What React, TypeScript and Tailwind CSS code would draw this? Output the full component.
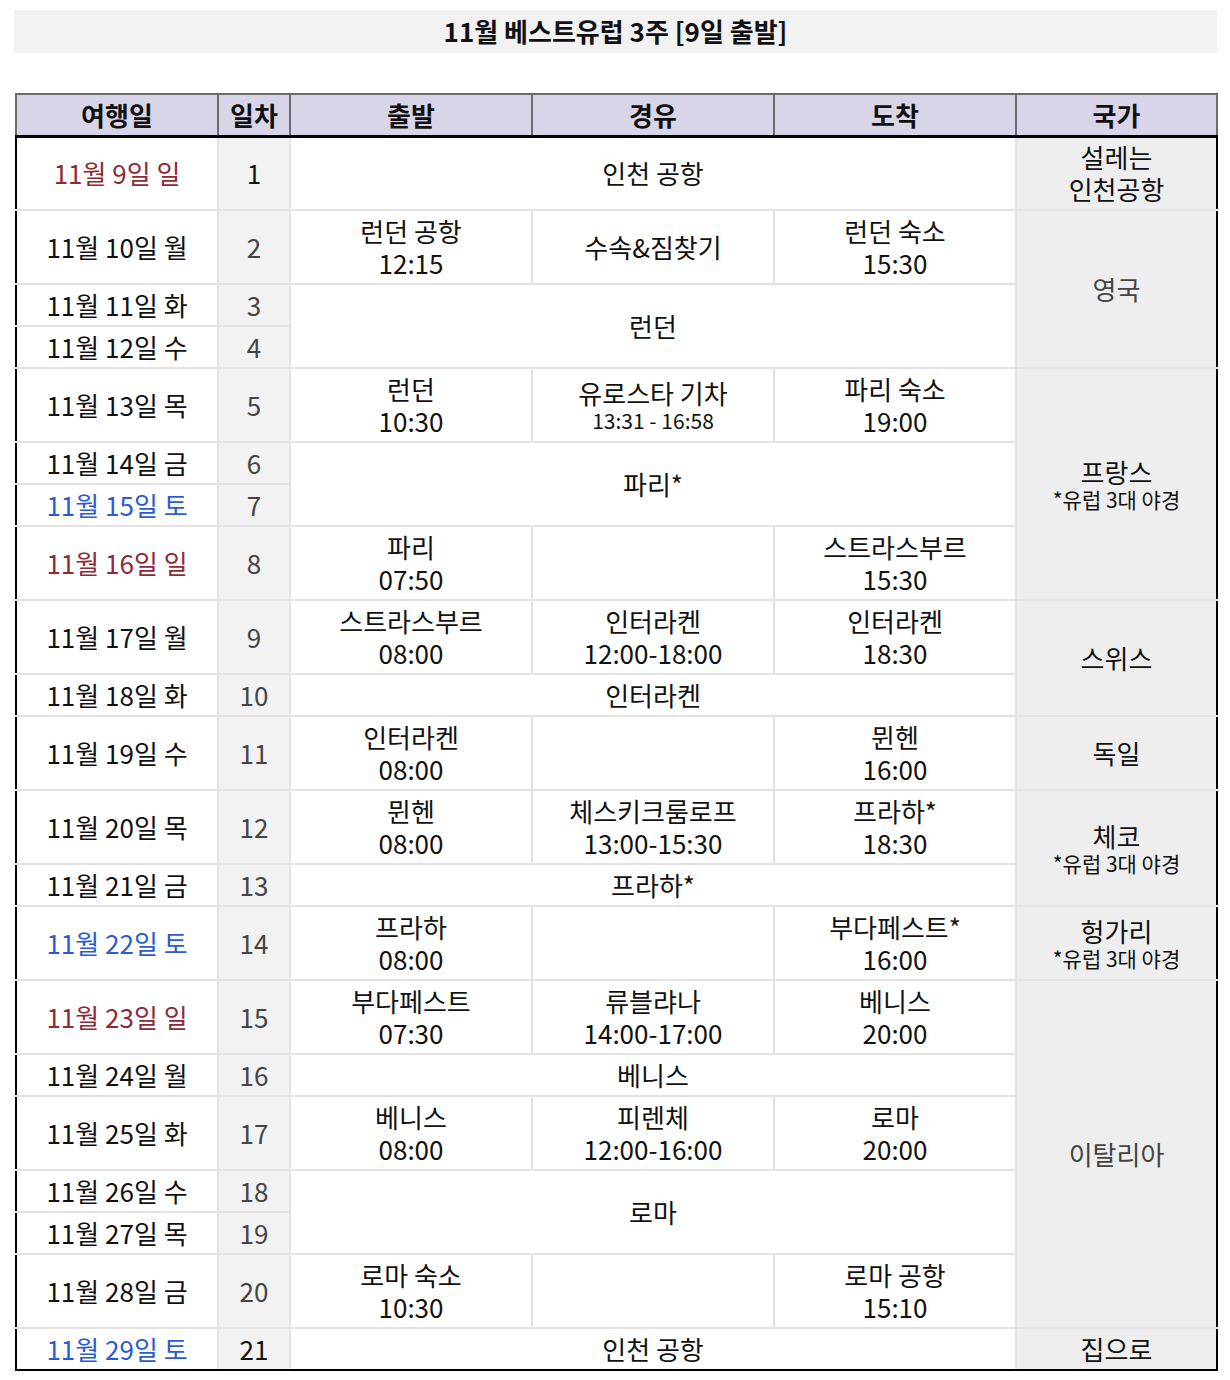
import React from "react";

type Stop = { place: string; time?: string; small?: boolean } | null;

type Row = {
  date: string;
  tone?: "sun" | "sat";
  day: number;
  dayDark?: boolean;
  h: "tall" | "short";
  route?:
    | { kind: "split"; from: Stop; via: Stop; to: Stop }
    | { kind: "span"; text: string; rows: number };
  country?: { name: string; note?: string; rows: number; muted?: boolean };
};

const rows: Row[] = [
  { date: "11월 9일 일", tone: "sun", day: 1, dayDark: true, h: "tall", route: { kind: "span", text: "인천 공항", rows: 1 }, country: { name: "설레는\n인천공항", rows: 1 } },
  { date: "11월 10일 월", day: 2, h: "tall", route: { kind: "split", from: { place: "런던 공항", time: "12:15" }, via: { place: "수속&짐찾기" }, to: { place: "런던 숙소", time: "15:30" } }, country: { name: "영국", rows: 3, muted: true } },
  { date: "11월 11일 화", day: 3, h: "short", route: { kind: "span", text: "런던", rows: 2 } },
  { date: "11월 12일 수", day: 4, h: "short" },
  { date: "11월 13일 목", day: 5, h: "tall", route: { kind: "split", from: { place: "런던", time: "10:30" }, via: { place: "유로스타 기차", time: "13:31 - 16:58", small: true }, to: { place: "파리 숙소", time: "19:00" } }, country: { name: "프랑스", note: "*유럽 3대 야경", rows: 4 } },
  { date: "11월 14일 금", day: 6, h: "short", route: { kind: "span", text: "파리*", rows: 2 } },
  { date: "11월 15일 토", tone: "sat", day: 7, h: "short" },
  { date: "11월 16일 일", tone: "sun", day: 8, h: "tall", route: { kind: "split", from: { place: "파리", time: "07:50" }, via: null, to: { place: "스트라스부르", time: "15:30" } } },
  { date: "11월 17일 월", day: 9, h: "tall", route: { kind: "split", from: { place: "스트라스부르", time: "08:00" }, via: { place: "인터라켄", time: "12:00-18:00" }, to: { place: "인터라켄", time: "18:30" } }, country: { name: "스위스", rows: 2 } },
  { date: "11월 18일 화", day: 10, h: "short", route: { kind: "span", text: "인터라켄", rows: 1 } },
  { date: "11월 19일 수", day: 11, h: "tall", route: { kind: "split", from: { place: "인터라켄", time: "08:00" }, via: null, to: { place: "뮌헨", time: "16:00" } }, country: { name: "독일", rows: 1 } },
  { date: "11월 20일 목", day: 12, h: "tall", route: { kind: "split", from: { place: "뮌헨", time: "08:00" }, via: { place: "체스키크룸로프", time: "13:00-15:30" }, to: { place: "프라하*", time: "18:30" } }, country: { name: "체코", note: "*유럽 3대 야경", rows: 2 } },
  { date: "11월 21일 금", day: 13, h: "short", route: { kind: "span", text: "프라하*", rows: 1 } },
  { date: "11월 22일 토", tone: "sat", day: 14, h: "tall", route: { kind: "split", from: { place: "프라하", time: "08:00" }, via: null, to: { place: "부다페스트*", time: "16:00" } }, country: { name: "헝가리", note: "*유럽 3대 야경", rows: 1 } },
  { date: "11월 23일 일", tone: "sun", day: 15, h: "tall", route: { kind: "split", from: { place: "부다페스트", time: "07:30" }, via: { place: "류블랴나", time: "14:00-17:00" }, to: { place: "베니스", time: "20:00" } }, country: { name: "이탈리아", rows: 6, muted: true } },
  { date: "11월 24일 월", day: 16, h: "short", route: { kind: "span", text: "베니스", rows: 1 } },
  { date: "11월 25일 화", day: 17, h: "tall", route: { kind: "split", from: { place: "베니스", time: "08:00" }, via: { place: "피렌체", time: "12:00-16:00" }, to: { place: "로마", time: "20:00" } } },
  { date: "11월 26일 수", day: 18, h: "short", route: { kind: "span", text: "로마", rows: 2 } },
  { date: "11월 27일 목", day: 19, h: "short" },
  { date: "11월 28일 금", day: 20, h: "tall", route: { kind: "split", from: { place: "로마 숙소", time: "10:30" }, via: null, to: { place: "로마 공항", time: "15:10" } } },
  { date: "11월 29일 토", tone: "sat", day: 21, dayDark: true, h: "short", route: { kind: "span", text: "인천 공항", rows: 1 }, country: { name: "집으로", rows: 1 } },
];

const cell = "border-2 border-[#e3e3e3] p-0 text-center align-middle";

function StopCell({ stop, last }: { stop: Stop; last: boolean }) {
  return (
    <td className={`${cell} ${last ? "border-b-black" : ""}`}>
      {stop &&
        (stop.small ? (
          <div className="flex flex-col items-center">
            <span className="leading-[30px]">{stop.place}</span>
            <span className="text-[21px] leading-[24px]">{stop.time}</span>
          </div>
        ) : (
          <div className="whitespace-pre-line leading-[32px]">
            {stop.time ? `${stop.place}\n${stop.time}` : stop.place}
          </div>
        ))}
    </td>
  );
}

export default function App() {
  const n = rows.length;
  return (
    <div className="min-h-[1380px] bg-white pt-[10px] font-['Noto_Sans_CJK_KR','Noto_Sans',sans-serif] text-[#111]">
      <div className="mx-[14px] flex h-[43px] w-[1203px] items-center justify-center bg-[#f2f2f2] pb-[3px] text-[26px] font-bold">
        11월 베스트유럽 3주 [9일 출발]
      </div>
      <table className="mx-[15px] mt-[40px] w-[1201px] table-fixed border-collapse text-[26px]">
        <colgroup>
          <col className="w-[202px]" />
          <col className="w-[72px]" />
          <col className="w-[242px]" />
          <col className="w-[242px]" />
          <col className="w-[242px]" />
          <col className="w-[201px]" />
        </colgroup>
        <thead>
          <tr className="h-[42px] bg-[#d9d5e8]">
            {["여행일", "일차", "출발", "경유", "도착", "국가"].map((t) => (
              <th
                key={t}
                className="border-2 border-[#6b6b6b] border-b-[3px] border-b-black p-0 text-center font-bold leading-[32px]"
              >
                {t}
              </th>
            ))}
          </tr>
        </thead>
        <tbody>
          {rows.map((r, i) => {
            const last = i === n - 1;
            const dateColor =
              r.tone === "sun" ? "text-[#8c2a36]" : r.tone === "sat" ? "text-[#2a5bd2]" : "text-[#111]";
            return (
              <tr key={r.day} className={r.h === "tall" ? "h-[74px]" : "h-[42px]"}>
                <td className={`${cell} border-l-black leading-[32px] ${dateColor} ${last ? "border-b-black" : ""}`}>
                  {r.date}
                </td>
                <td
                  className={`${cell} bg-[#f2f2f2] leading-[32px] ${r.dayDark ? "text-[#111]" : "text-[#444]"} ${last ? "border-b-black" : ""}`}
                >
                  {r.day}
                </td>
                {r.route?.kind === "split" && (
                  <>
                    <StopCell stop={r.route.from} last={last} />
                    <StopCell stop={r.route.via} last={last} />
                    <StopCell stop={r.route.to} last={last} />
                  </>
                )}
                {r.route?.kind === "span" && (
                  <td
                    colSpan={3}
                    rowSpan={r.route.rows}
                    className={`${cell} leading-[32px] ${i + r.route.rows === n ? "border-b-black" : ""}`}
                  >
                    {r.route.text}
                  </td>
                )}
                {r.country && (
                  <td
                    rowSpan={r.country.rows}
                    className={`${cell} border-r-black bg-[#eeeeee] ${r.country.muted ? "text-[#444]" : "text-[#111]"} ${i + r.country.rows === n ? "border-b-black" : ""}`}
                  >
                    {r.country.note ? (
                      <div className="flex flex-col items-center">
                        <span className="leading-[30px]">{r.country.name}</span>
                        <span className="text-[21px] leading-[24px]">{r.country.note}</span>
                      </div>
                    ) : (
                      <div className="whitespace-pre-line leading-[32px]">{r.country.name}</div>
                    )}
                  </td>
                )}
              </tr>
            );
          })}
        </tbody>
      </table>
    </div>
  );
}
